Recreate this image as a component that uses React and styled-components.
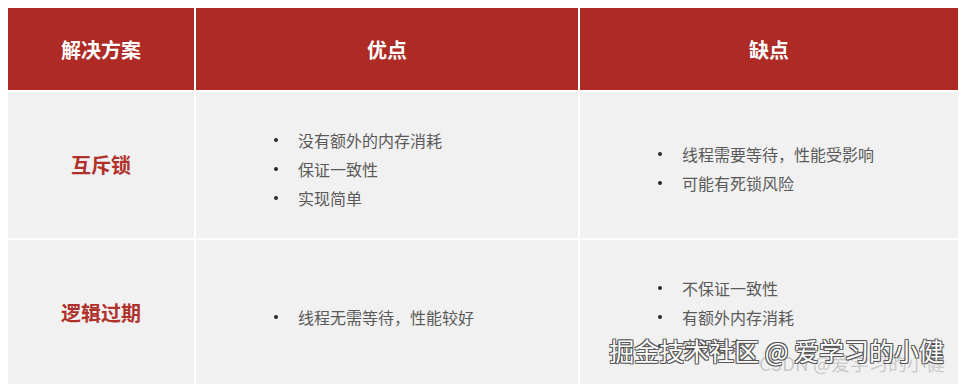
import React from 'react';
import styled, { createGlobalStyle } from 'styled-components';

const rows = [
  {
    name: '互斥锁',
    pros: ['没有额外的内存消耗', '保证一致性', '实现简单'],
    cons: ['线程需要等待，性能受影响', '可能有死锁风险'],
  },
  {
    name: '逻辑过期',
    pros: ['线程无需等待，性能较好'],
    cons: ['不保证一致性', '有额外内存消耗', '实现复杂'],
  },
];

const GlobalStyle = createGlobalStyle`
  body {
    margin: 0;
    background: #ffffff;
    font-family: "Liberation Serif", "Noto Sans CJK SC", serif;
    overflow: hidden;
  }
`;

const Page = styled.div`
  position: relative;
  height: 384px;
  padding: 8px 1px 0 8px;
  box-sizing: border-box;
`;

const Table = styled.div`
  display: grid;
  grid-template-columns: 186px 382px 1fr;
  grid-template-rows: 82px 146px 146px;
  gap: 2px;
  background: #ffffff;
`;

const HeadCell = styled.div`
  background: #ad2a25;
  color: #ffffff;
  display: flex;
  align-items: center;
  justify-content: center;
  font-family: "Noto Sans CJK SC", sans-serif;
  font-weight: 700;
  font-size: 20px;
`;

const NameCell = styled.div`
  background: #f1f1f1;
  display: flex;
  align-items: center;
  justify-content: center;
  color: #b0302b;
  font-family: "Noto Sans CJK SC", sans-serif;
  font-weight: 700;
  font-size: 20px;
  padding-bottom: 1px;
`;

const ListCell = styled.div`
  background: #f1f1f1;
  display: flex;
  align-items: center;
  padding: 7px 0 0 78px;
`;

const List = styled.ul`
  margin: 0;
  padding: 0;
  list-style: none;
  display: flex;
  flex-direction: column;
  gap: 9px;
`;

const Item = styled.li`
  display: flex;
  align-items: center;
  gap: 20px;
  height: 20px;
  font-family: "Noto Sans CJK SC", sans-serif;
  font-size: 16px;
  color: #5a5a5a;

  &::before {
    content: '';
    width: 4px;
    height: 4px;
    border-radius: 50%;
    background: #2a2a2a;
    flex: none;
  }
`;

const Watermark = styled.div`
  position: absolute;
  right: 15px;
  bottom: 16px;
  font-family: "Noto Sans CJK SC", sans-serif;
  font-size: 25px;
  color: #ffffff;
  white-space: nowrap;
  text-shadow: 1px 1px 0 #555, -1px -1px 0 #555, 1px -1px 0 #555, -1px 1px 0 #555;
`;

const Faint = styled.div`
  position: absolute;
  right: 14px;
  bottom: 8px;
  font-family: "Noto Sans CJK SC", sans-serif;
  font-size: 19px;
  color: rgba(150, 150, 150, 0.45);
  white-space: nowrap;
`;

const App = () => {
  return (
    <Page>
      <GlobalStyle />
      <Table>
        <HeadCell>解决方案</HeadCell>
        <HeadCell>优点</HeadCell>
        <HeadCell>缺点</HeadCell>
        {rows.map((row) => (
          <React.Fragment key={row.name}>
            <NameCell>{row.name}</NameCell>
            <ListCell>
              <List>
                {row.pros.map((p) => <Item key={p}>{p}</Item>)}
              </List>
            </ListCell>
            <ListCell>
              <List>
                {row.cons.map((c) => <Item key={c}>{c}</Item>)}
              </List>
            </ListCell>
          </React.Fragment>
        ))}
      </Table>
      <Faint>CSDN @爱学习的小健</Faint>
      <Watermark>掘金技术社区 @ 爱学习的小健</Watermark>
    </Page>
  );
};

export default App;
